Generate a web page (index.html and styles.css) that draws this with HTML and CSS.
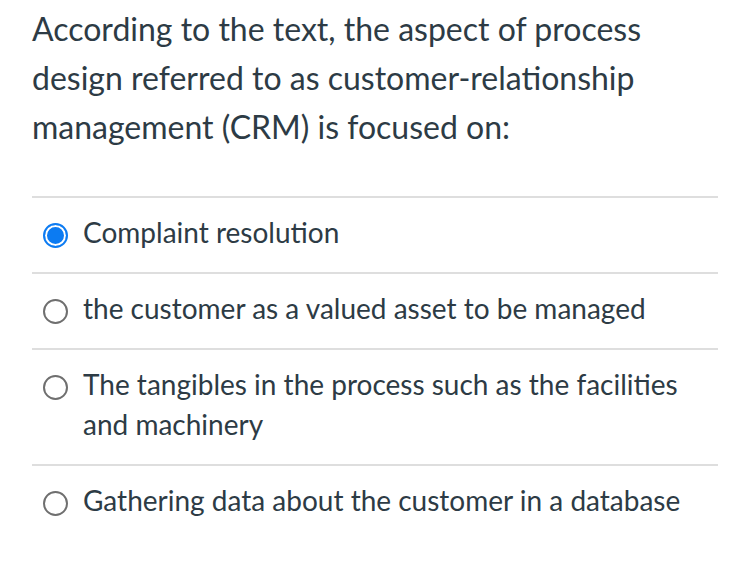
FILE: index.html
```html
<!DOCTYPE html>
<html>
<head>
<meta charset="utf-8">
<link rel="stylesheet" href="styles.css">
</head>
<body>
<div class="quiz">
  <p class="question">According to the text, the aspect of process design referred to as customer-relationship management (CRM) is focused on:</p>
  <div class="answers">
    <label class="answer">
      <span class="radio checked"></span>
      <span class="text">Complaint resolution</span>
    </label>
    <label class="answer">
      <span class="radio"></span>
      <span class="text">the customer as a valued asset to be managed</span>
    </label>
    <label class="answer">
      <span class="radio"></span>
      <span class="text">The tangibles in the process such as the facilities and machinery</span>
    </label>
    <label class="answer">
      <span class="radio"></span>
      <span class="text">Gathering data about the customer in a database</span>
    </label>
  </div>
</div>
</body>
</html>
```
FILE: styles.css
```css
html, body {
  margin: 0;
  padding: 0;
  background: #fff;
}
body {
  font-family: Lato, "Open Sans", sans-serif;
  color: #2d3b45;
}
.quiz {
  padding: 4px 30px 0 32px;
}
.question {
  margin: 0;
  font-size: 32px;
  line-height: 49px;
  width: 660px;
}
.answers {
  margin-top: 45px;
  border-top: 2px solid #dedede;
}
.answer {
  display: flex;
  align-items: flex-start;
  gap: 15px;
  padding: 14px 0 20px 11px;
  border-bottom: 2px solid #dedede;
}
.answer:last-child {
  border-bottom: none;
}
.radio {
  flex: none;
  width: 25px;
  height: 25px;
  margin-top: 11px;
  border: 2px solid #6f6f6f;
  border-radius: 50%;
  box-sizing: border-box;
  background: #fff;
}
.radio.checked {
  border-color: #0c7bf2;
  box-shadow: inset 0 0 0 2px #fff, inset 0 0 0 12px #0c7bf2;
}
.text {
  font-size: 28px;
  line-height: 40px;
}
```
